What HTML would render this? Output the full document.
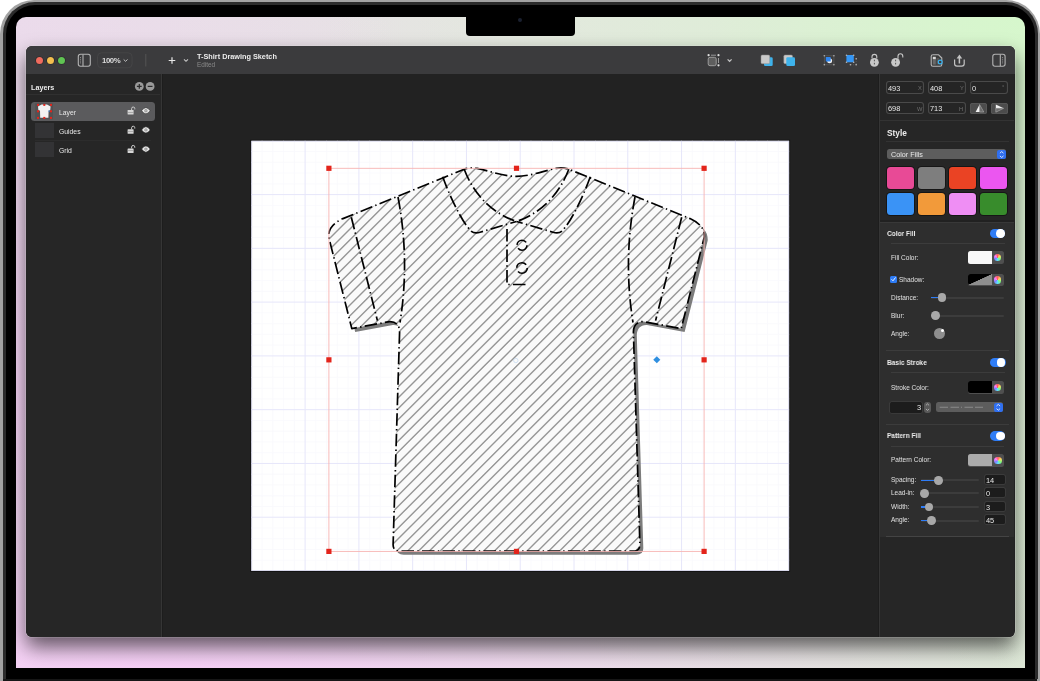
<!DOCTYPE html>
<html><head><meta charset="utf-8">
<style>
*{margin:0;padding:0;box-sizing:border-box}
html,body{width:1040px;height:681px;overflow:hidden;background:#fff}
body{position:relative;font-family:"Liberation Sans",sans-serif;color:#e6e6e6}
.a{position:absolute}
.t{position:absolute;white-space:nowrap;line-height:1;will-change:transform}
.fld{border-radius:3px;background:#252525;box-shadow:inset 0 0 0 1.1px #4a4a4a}
.fv{font-size:7.4px;color:#e8e8e8}
.fl{font-size:5.7px;color:#707070}
.sw{width:27px;height:21.5px;border-radius:3.5px;box-shadow:0 0 0 1px rgba(0,0,0,.4)}
.hd{font-size:7.3px;font-weight:bold;color:#ececec;transform:scaleX(.9);transform-origin:0 0}
.lb{font-size:6.5px;color:#e0e0e0}
.sep{height:.8px;background:#3c3c3c}
.tg{width:15.3px;height:9.7px;border-radius:5px;background:#2f7df6}
.kn{position:absolute;right:.6px;top:.6px;width:8.5px;height:8.5px;border-radius:50%;background:#fff}
.well{width:36px;height:12.6px;border-radius:2.5px;background:#4f4f4f}
.cw{right:2.5px;top:2.6px;width:7.4px;height:7.4px;border-radius:50%;background:conic-gradient(#ff5f5f,#ffd55f,#7fff7f,#5fe0ff,#7f7fff,#ff7fff,#ff5f5f);filter:blur(.3px)}
.trk{height:2px;background:#3c3c3c;border-radius:1px}
.knb{width:8.8px;height:8.8px;border-radius:50%;background:#a8a8a8}
.nf{width:20.4px;height:9.5px;border-radius:1.5px;background:#1c1c1c;box-shadow:0 0 0 .7px #404040}
</style></head>
<body>
<!-- MacBook frame -->
<div class="a" style="left:0;top:0;width:1040px;height:720px;border-radius:34px;background:#a2a2a2"></div>
<div class="a" style="left:2.5px;top:1.8px;width:1035px;height:720px;border-radius:32px;background:#2b2b2b"></div>
<div class="a" style="left:5.5px;top:4.5px;width:1029px;height:720px;border-radius:29px;background:#000"></div>
<div class="a" style="left:0;top:679px;width:1040px;height:2px;background:#161616"></div>
<div class="a" style="left:0;top:679px;width:3px;height:2px;background:#a2a2a2"></div>
<div class="a" style="left:1037px;top:679px;width:3px;height:2px;background:#a2a2a2"></div>

<!-- screen -->
<div class="a" id="screen" style="left:16px;top:17px;width:1009px;height:651px;border-radius:10px 10px 0 0;overflow:hidden;
background:radial-gradient(ellipse 95% 40% at 15% 100%,rgba(248,205,248,.85) 0%,rgba(240,212,240,.45) 55%,rgba(235,225,235,0) 100%),radial-gradient(ellipse 45% 110% at 0% 60%,rgba(245,208,245,.9) 0%,rgba(238,215,238,.4) 50%,rgba(235,225,235,0) 100%),radial-gradient(ellipse 70% 100% at 100% 0%,rgba(214,247,204,1) 0%,rgba(222,240,214,.6) 45%,rgba(228,232,224,0) 100%),linear-gradient(90deg,#e9dde9,#e5e4e2 50%,#dae9d3)">
</div>
<!-- notch -->
<div class="a" style="left:466px;top:10px;width:109px;height:26px;background:#000;border-radius:0 0 4px 4px"></div>
<div class="a" style="left:518px;top:18px;width:4px;height:4px;border-radius:50%;background:#1a2030"></div>

<!-- window -->
<div class="a" id="win" style="left:26px;top:46px;width:988.5px;height:591px;border-radius:6px;background:#222222;overflow:hidden;
box-shadow:0 0 0 0.6px rgba(255,255,255,.3),0 10px 20px rgba(0,0,0,.6)">
  <!-- toolbar -->
  <div class="a" style="left:0;top:0;width:988.5px;height:28px;background:#3b3b3d"></div>
  <div class="a" style="left:0;top:28px;width:134.5px;height:563px;background:#262626"></div>
  <div class="a" style="left:853.9px;top:28px;width:134.6px;height:563px;background:#262626"></div>
</div>

<!--CANVAS-->
<svg class="a" style="left:0;top:0" width="1040" height="681" viewBox="0 0 1040 681">
<rect x="250.85" y="140.3" width="538.75" height="431.10" fill="none" stroke="#121212" stroke-width="1"/>
<rect x="251.35" y="140.8" width="537.75" height="430.10" fill="#ffffff"/>
<path d="M262.11 140.8V570.9M272.86 140.8V570.9M283.62 140.8V570.9M294.37 140.8V570.9M315.88 140.8V570.9M326.63 140.8V570.9M337.39 140.8V570.9M348.14 140.8V570.9M369.65 140.8V570.9M380.41 140.8V570.9M391.16 140.8V570.9M401.92 140.8V570.9M423.43 140.8V570.9M434.18 140.8V570.9M444.94 140.8V570.9M455.69 140.8V570.9M477.20 140.8V570.9M487.96 140.8V570.9M498.71 140.8V570.9M509.47 140.8V570.9M530.98 140.8V570.9M541.74 140.8V570.9M552.49 140.8V570.9M563.25 140.8V570.9M584.75 140.8V570.9M595.51 140.8V570.9M606.26 140.8V570.9M617.02 140.8V570.9M638.53 140.8V570.9M649.28 140.8V570.9M660.04 140.8V570.9M670.79 140.8V570.9M692.30 140.8V570.9M703.06 140.8V570.9M713.81 140.8V570.9M724.57 140.8V570.9M746.08 140.8V570.9M756.83 140.8V570.9M767.59 140.8V570.9M778.35 140.8V570.9M251.35 151.56H789.1M251.35 162.31H789.1M251.35 173.06H789.1M251.35 183.82H789.1M251.35 205.33H789.1M251.35 216.09H789.1M251.35 226.84H789.1M251.35 237.59H789.1M251.35 259.11H789.1M251.35 269.86H789.1M251.35 280.62H789.1M251.35 291.37H789.1M251.35 312.88H789.1M251.35 323.63H789.1M251.35 334.39H789.1M251.35 345.14H789.1M251.35 366.65H789.1M251.35 377.41H789.1M251.35 388.16H789.1M251.35 398.92H789.1M251.35 420.43H789.1M251.35 431.19H789.1M251.35 441.94H789.1M251.35 452.69H789.1M251.35 474.20H789.1M251.35 484.96H789.1M251.35 495.71H789.1M251.35 506.47H789.1M251.35 527.98H789.1M251.35 538.73H789.1M251.35 549.49H789.1M251.35 560.24H789.1" stroke="#f9f9fd" stroke-width="0.8"/>
<path d="M305.12 140.8V570.9M358.90 140.8V570.9M412.67 140.8V570.9M466.45 140.8V570.9M520.23 140.8V570.9M574.00 140.8V570.9M627.77 140.8V570.9M681.55 140.8V570.9M735.32 140.8V570.9M251.35 194.58H789.1M251.35 248.35H789.1M251.35 302.12H789.1M251.35 355.90H789.1M251.35 409.68H789.1M251.35 463.45H789.1M251.35 517.23H789.1" stroke="#e6e6fa" stroke-width="1"/>
<defs><clipPath id="shirtclip"><path d="M 516.5 551.2 L 400.20 551.20 Q 393.00 551.20 393.10 544.50 L 399.60 332.00 C 399.60 325.50 396.00 321.30 389.50 321.60 L 351.80 328.60 L 328.70 237.00 C 328.20 228.50 333.50 223.00 343.00 218.60 L 464.20 169.20 C 468.50 167.80 473.00 167.60 477.00 168.40 C 490.00 171.00 503.00 176.30 516.50 176.30 C 530.00 176.30 543.00 171.00 556.00 168.40 C 560.00 167.60 564.50 167.80 568.80 169.20 L 690.00 218.60 C 699.50 223.00 704.80 228.50 704.30 237.00 L 681.20 328.60 L 643.50 321.60 C 637.00 321.30 633.40 325.50 633.40 332.00 L 639.90 544.50 Q 640.00 551.20 632.80 551.20 L 516.50 551.20 Z"/></clipPath></defs>
<rect x="251.75" y="141.20000000000002" width="536.95" height="429.30" fill="none" stroke="#d4d4ea" stroke-width=".8"/>
<path d="M 516.5 551.2 L 400.20 551.20 Q 393.00 551.20 393.10 544.50 L 399.60 332.00 C 399.60 325.50 396.00 321.30 389.50 321.60 L 351.80 328.60 L 328.70 237.00 C 328.20 228.50 333.50 223.00 343.00 218.60 L 464.20 169.20 C 468.50 167.80 473.00 167.60 477.00 168.40 C 490.00 171.00 503.00 176.30 516.50 176.30 C 530.00 176.30 543.00 171.00 556.00 168.40 C 560.00 167.60 564.50 167.80 568.80 169.20 L 690.00 218.60 C 699.50 223.00 704.80 228.50 704.30 237.00 L 681.20 328.60 L 643.50 321.60 C 637.00 321.30 633.40 325.50 633.40 332.00 L 639.90 544.50 Q 640.00 551.20 632.80 551.20 L 516.50 551.20 Z" fill="#7c7c7c" transform="translate(3.4 3.5)"/>
<path d="M 516.5 551.2 L 400.20 551.20 Q 393.00 551.20 393.10 544.50 L 399.60 332.00 C 399.60 325.50 396.00 321.30 389.50 321.60 L 351.80 328.60 L 328.70 237.00 C 328.20 228.50 333.50 223.00 343.00 218.60 L 464.20 169.20 C 468.50 167.80 473.00 167.60 477.00 168.40 C 490.00 171.00 503.00 176.30 516.50 176.30 C 530.00 176.30 543.00 171.00 556.00 168.40 C 560.00 167.60 564.50 167.80 568.80 169.20 L 690.00 218.60 C 699.50 223.00 704.80 228.50 704.30 237.00 L 681.20 328.60 L 643.50 321.60 C 637.00 321.30 633.40 325.50 633.40 332.00 L 639.90 544.50 Q 640.00 551.20 632.80 551.20 L 516.50 551.20 Z" fill="#fafafa"/>
<path d="M-67.85 560L332.15 160M-57.00 560L343.00 160M-46.15 560L353.85 160M-35.30 560L364.70 160M-24.45 560L375.55 160M-13.60 560L386.40 160M-2.75 560L397.25 160M8.10 560L408.10 160M18.95 560L418.95 160M29.80 560L429.80 160M40.65 560L440.65 160M51.50 560L451.50 160M62.35 560L462.35 160M73.20 560L473.20 160M84.05 560L484.05 160M94.90 560L494.90 160M105.75 560L505.75 160M116.60 560L516.60 160M127.45 560L527.45 160M138.30 560L538.30 160M149.15 560L549.15 160M160.00 560L560.00 160M170.85 560L570.85 160M181.70 560L581.70 160M192.55 560L592.55 160M203.40 560L603.40 160M214.25 560L614.25 160M225.10 560L625.10 160M235.95 560L635.95 160M246.80 560L646.80 160M257.65 560L657.65 160M268.50 560L668.50 160M279.35 560L679.35 160M290.20 560L690.20 160M301.05 560L701.05 160M311.90 560L711.90 160M322.75 560L722.75 160M333.60 560L733.60 160M344.45 560L744.45 160M355.30 560L755.30 160M366.15 560L766.15 160M377.00 560L777.00 160M387.85 560L787.85 160M398.70 560L798.70 160M409.55 560L809.55 160M420.40 560L820.40 160M431.25 560L831.25 160M442.10 560L842.10 160M452.95 560L852.95 160M463.80 560L863.80 160M474.65 560L874.65 160M485.50 560L885.50 160M496.35 560L896.35 160M507.20 560L907.20 160M518.05 560L918.05 160M528.90 560L928.90 160M539.75 560L939.75 160M550.60 560L950.60 160M561.45 560L961.45 160M572.30 560L972.30 160M583.15 560L983.15 160M594.00 560L994.00 160M604.85 560L1004.85 160M615.70 560L1015.70 160M626.55 560L1026.55 160M637.40 560L1037.40 160M648.25 560L1048.25 160M659.10 560L1059.10 160M669.95 560L1069.95 160M680.80 560L1080.80 160M691.65 560L1091.65 160M702.50 560L1102.50 160" stroke="#969696" stroke-width="1.4" clip-path="url(#shirtclip)"/>
<path d="M 516.5 551.2 L 400.20 551.20 Q 393.00 551.20 393.10 544.50 L 399.60 332.00 C 399.60 325.50 396.00 321.30 389.50 321.60 L 351.80 328.60 L 328.70 237.00 C 328.20 228.50 333.50 223.00 343.00 218.60 L 464.20 169.20 C 468.50 167.80 473.00 167.60 477.00 168.40 C 490.00 171.00 503.00 176.30 516.50 176.30 C 530.00 176.30 543.00 171.00 556.00 168.40 C 560.00 167.60 564.50 167.80 568.80 169.20 L 690.00 218.60 C 699.50 223.00 704.80 228.50 704.30 237.00 L 681.20 328.60 L 643.50 321.60 C 637.00 321.30 633.40 325.50 633.40 332.00 L 639.90 544.50 Q 640.00 551.20 632.80 551.20 L 516.50 551.20 Z" stroke="#000" stroke-width="1.7" fill="none" stroke-dasharray="12.5 3.3 1.4 3.3" stroke-linejoin="round"/>
<path d="M 351.3 217.2 L 377.4 320.6" stroke="#000" stroke-width="1.7" fill="none" stroke-dasharray="12.5 3.3 1.4 3.3" stroke-linejoin="round"/>
<path d="M 681.70 217.2 L 655.60 320.6" stroke="#000" stroke-width="1.7" fill="none" stroke-dasharray="12.5 3.3 1.4 3.3" stroke-linejoin="round"/>
<path d="M 398 197 Q 410 260 400 322.5" stroke="#000" stroke-width="1.7" fill="none" stroke-dasharray="12.5 3.3 1.4 3.3" stroke-linejoin="round"/>
<path d="M 635.00 197 Q 623.00 260 633.00 322.5" stroke="#000" stroke-width="1.7" fill="none" stroke-dasharray="12.5 3.3 1.4 3.3" stroke-linejoin="round"/>
<path d="M 442.7 176.8 C 450 197, 462 222, 471 231 Q 474.5 234 480 232.2 L 516.5 221.5" stroke="#000" stroke-width="1.7" fill="none" stroke-dasharray="12.5 3.3 1.4 3.3" stroke-linejoin="round"/>
<path d="M 590.30 176.8 C 583.00 197, 571.00 222, 562.00 231 Q 558.50 234 553.00 232.2 L 516.5 221.5" stroke="#000" stroke-width="1.7" fill="none" stroke-dasharray="12.5 3.3 1.4 3.3" stroke-linejoin="round"/>
<path d="M 464.2 169.2 C 474 195, 492 213, 516.5 221.5" stroke="#000" stroke-width="1.7" fill="none" stroke-dasharray="12.5 3.3 1.4 3.3" stroke-linejoin="round"/>
<path d="M 568.80 169.2 C 559.00 195, 541.00 213, 516.5 221.5" stroke="#000" stroke-width="1.7" fill="none" stroke-dasharray="12.5 3.3 1.4 3.3" stroke-linejoin="round"/>
<path d="M 525.5 284.5 L 507 284.5 L 507 227.5" stroke="#000" stroke-width="1.7" fill="none" stroke-dasharray="12.5 3.3 1.4 3.3" stroke-linejoin="round"/>
<circle cx="522" cy="245.2" r="5" stroke="#000" stroke-width="1.6" fill="none" stroke-dasharray="12 3.7"/>
<circle cx="522" cy="268" r="5.3" stroke="#000" stroke-width="1.6" fill="none" stroke-dasharray="12.5 4"/>
<rect x="328.9" y="168.3" width="375.20" height="383.10" fill="none" stroke="#f7b4b2" stroke-width="0.9"/>
<rect x="326.30" y="165.70" width="5.2" height="5.2" fill="#e3241b"/>
<rect x="326.30" y="357.25" width="5.2" height="5.2" fill="#e3241b"/>
<rect x="326.30" y="548.80" width="5.2" height="5.2" fill="#e3241b"/>
<rect x="513.90" y="165.70" width="5.2" height="5.2" fill="#e3241b"/>
<rect x="513.90" y="548.80" width="5.2" height="5.2" fill="#e3241b"/>
<rect x="701.50" y="165.70" width="5.2" height="5.2" fill="#e3241b"/>
<rect x="701.50" y="357.25" width="5.2" height="5.2" fill="#e3241b"/>
<rect x="701.50" y="548.80" width="5.2" height="5.2" fill="#e3241b"/>
<rect x="654.3" y="357.3" width="5" height="5" fill="#2f8fe0" transform="rotate(45 656.8 359.8)"/>
<circle cx="515.8" cy="360.5" r="2.2" fill="none" stroke="#b8d4f0" stroke-width=".6"/>
</svg>
<!--/CANVAS-->
<!-- toolbar contents (page coords) -->
<div class="a" style="left:36.1px;top:56.5px;width:7px;height:7px;border-radius:50%;background:#ef6b5e;box-shadow:0 0 0 .6px rgba(0,0,0,.35)"></div>
<div class="a" style="left:47.2px;top:56.5px;width:7px;height:7px;border-radius:50%;background:#f4bf4f;box-shadow:0 0 0 .6px rgba(0,0,0,.35)"></div>
<div class="a" style="left:58px;top:56.5px;width:7px;height:7px;border-radius:50%;background:#60c453;box-shadow:0 0 0 .6px rgba(0,0,0,.35)"></div>

<svg class="a" style="left:0;top:0" width="1040" height="681" viewBox="0 0 1040 681">
  <!-- sidebar toggle icon -->
  <rect x="78.3" y="54.3" width="12" height="12" rx="2.2" fill="none" stroke="#b4b4b4" stroke-width="1.1"/>
  <line x1="83" y1="54.5" x2="83" y2="66" stroke="#b4b4b4" stroke-width="1.1"/>
  <line x1="80.5" y1="57" x2="80.5" y2="63.5" stroke="#8a8a8a" stroke-width="1" stroke-dasharray="1,.8"/>
  <!-- zoom box -->
  <rect x="97.5" y="52.8" width="34.6" height="15" rx="4" fill="#3b3b3d" stroke="#474749" stroke-width="0.8"/>
  <path d="M123.7 59.5 L125.6 61.3 L127.5 59.5" fill="none" stroke="#cfcfcf" stroke-width="0.9"/>
  <line x1="145.8" y1="54" x2="145.8" y2="66.5" stroke="#555" stroke-width="1"/>
  <!-- plus -->
  <path d="M172 57.2 V63.8 M168.7 60.5 H175.3" stroke="#e8e8e8" stroke-width="1.2"/>
  <path d="M184 59.4 L186 61.3 L188 59.4" fill="none" stroke="#c4c4c4" stroke-width="1.1"/>

  <!-- right toolbar icons -->
  <g>
    <rect x="708.2" y="57.3" width="8" height="8.4" rx="1.8" fill="#5e5e5e" stroke="#9c9c9c" stroke-width="1"/>
    <path d="M711 55.2 H716" stroke="#9a9a9a" stroke-width="1"/>
    <path d="M718.5 58 V63" stroke="#9a9a9a" stroke-width="1"/>
    <circle cx="708.6" cy="55.2" r="1.1" fill="#e0e0e0"/><circle cx="718.5" cy="55.2" r="1.1" fill="#e0e0e0"/><circle cx="718.5" cy="65.3" r="1.1" fill="#e0e0e0"/>
    <path d="M727.6 59.4 L729.6 61.3 L731.6 59.4" fill="none" stroke="#c4c4c4" stroke-width="1.2"/>
  </g>
  <g>
    <rect x="764" y="57.3" width="8.7" height="8.7" rx="1.3" fill="#3eb3ec"/>
    <rect x="761" y="55" width="8.7" height="8.7" rx="1.3" fill="#c9c9c9" stroke="#8a8a8a" stroke-width=".5"/>
    <rect x="783.8" y="55" width="8.7" height="8.7" rx="1.3" fill="#c9c9c9" stroke="#8a8a8a" stroke-width=".5"/>
    <rect x="786.3" y="57.3" width="8.7" height="8.7" rx="1.3" fill="#3eb3ec"/>
  </g>
  <g>
    <rect x="824.3" y="55.8" width="9.6" height="9" fill="none" stroke="#5c5c5c" stroke-width=".7"/>
    <circle cx="829.6" cy="60.8" r="2.5" fill="#f0f0f0"/>
    <rect x="825.8" y="57" width="4.9" height="4.6" rx=".5" fill="#2f86f0"/>
    <path d="M830.7 59.6 A2.2 2.2 0 0 1 827.6 61.6" fill="none" stroke="#2f86f0" stroke-width="0"/>
    <g fill="#b0b0b0"><circle cx="824.3" cy="55.8" r=".8"/><circle cx="833.9" cy="55.8" r=".8"/><circle cx="824.3" cy="64.8" r=".8"/><circle cx="833.9" cy="64.8" r=".8"/></g>
    <rect x="846.4" y="55.1" width="7.4" height="7.2" rx=".3" fill="#3597f5"/>
    <path d="M851 64.8 H856.2 V58.8" fill="none" stroke="#6a6a6a" stroke-width=".6" stroke-dasharray="1,1"/>
    <g fill="#b8b8b8"><circle cx="846.5" cy="55.2" r=".8"/><circle cx="853.7" cy="55.2" r=".8"/><circle cx="846.5" cy="62.2" r=".8"/><circle cx="853.7" cy="62.2" r=".8"/><circle cx="856.2" cy="58.8" r=".8"/><circle cx="850.4" cy="64.8" r=".8"/><circle cx="856.2" cy="64.8" r=".8"/></g>
  </g>
  <g fill="#c8c8c8">
    <path d="M872 58.5 V56.8 A2.4 2.4 0 0 1 876.8 56.8 V58.5" fill="none" stroke="#c8c8c8" stroke-width="1.1"/>
    <circle cx="874.4" cy="62.3" r="4.4"/>
    <rect x="873.9" y="59.7" width="1" height="1.6" fill="#555"/><rect x="873.9" y="62.8" width="1" height="1.6" fill="#555"/>
    <path d="M898 58.8 V56.2 A2.4 2.4 0 0 1 902.8 56.2 V57.5" fill="none" stroke="#c8c8c8" stroke-width="1.1"/>
    <circle cx="895.6" cy="62.3" r="4.4"/>
    <rect x="895.1" y="59.7" width="1" height="1.6" fill="#555"/><rect x="895.1" y="62.8" width="1" height="1.6" fill="#555"/>
  </g>
  <g>
    <path d="M933 54.8 H938.6 L941.8 58 V64.5 Q941.8 66.3 940 66.3 H933 Q931.2 66.3 931.2 64.5 V56.6 Q931.2 54.8 933 54.8 Z" fill="#3c3c3c" stroke="#b8b8b8" stroke-width="1.1" stroke-linejoin="round"/>
    <rect x="932.8" y="56.8" width="3" height="2.6" fill="#d8d8d8"/><rect x="932.8" y="59.6" width="3" height="5" fill="#6a6a6a"/>
    <rect x="936.5" y="58" width="2.5" height="6.5" fill="#555"/>
    <circle cx="940.2" cy="62" r="1.9" fill="#3c3c3c" stroke="#3ab4f2" stroke-width="1.2"/>
    <path d="M954.6 59.6 V63.8 Q954.6 66.2 957 66.2 H961.8 Q964.2 66.2 964.2 63.8 V59.6" fill="none" stroke="#c4c4c4" stroke-width="1.2"/>
    <path d="M959.4 63.5 V57.5" stroke="#c4c4c4" stroke-width="1.5"/>
    <path d="M956.6 58.6 L959.4 54.6 L962.2 58.6 Z" fill="#c4c4c4"/>
    <rect x="992.8" y="54.3" width="12.3" height="12" rx="2.2" fill="none" stroke="#b4b4b4" stroke-width="1.1"/>
    <line x1="1000.3" y1="54.5" x2="1000.3" y2="66" stroke="#b4b4b4" stroke-width="1.1"/>
    <line x1="1002.6" y1="57" x2="1002.6" y2="63.5" stroke="#8a8a8a" stroke-width="1" stroke-dasharray="1,.8"/>
  </g>
</svg>
<div class="t" style="left:102px;top:56.8px;font-size:7.8px;font-weight:bold;color:#dcdcdc;letter-spacing:-.4px">100%</div>
<div class="t" style="left:197.3px;top:52.6px;font-size:7.3px;font-weight:bold;color:#ececec">T-Shirt Drawing Sketch</div>
<div class="t" style="left:197.3px;top:61.6px;font-size:6.4px;color:#8a8a8a">Edited</div>

<!--PANELS-->
<!-- sidebar -->
<div class="a" style="left:160.5px;top:74px;width:1px;height:563px;background:#353535"></div><div class="a" style="left:161.5px;top:74px;width:1px;height:563px;background:#1d1d1d"></div>
<div class="t" style="left:31.4px;top:83.8px;font-size:7.2px;font-weight:bold;color:#ececec">Layers</div>
<div class="a" style="left:26px;top:94px;width:134px;height:1px;background:#303030"></div>
<svg class="a" style="left:0;top:0" width="200" height="170" viewBox="0 0 200 170">
  <circle cx="139.3" cy="86.4" r="4.4" fill="#9a9a9a"/>
  <path d="M139.3 84 V88.8 M136.9 86.4 H141.7" stroke="#2a2a2a" stroke-width="1.2"/>
  <circle cx="150.1" cy="86.4" r="4.4" fill="#9a9a9a"/>
  <path d="M147.7 86.4 H152.5" stroke="#2a2a2a" stroke-width="1.2"/>
</svg>
<div class="a" style="left:31.4px;top:101.6px;width:123.6px;height:19.5px;border-radius:3.5px;background:#5b5b5d"></div>
<div class="a" style="left:35.3px;top:122.6px;width:18.5px;height:15.3px;background:#333335"></div>
<div class="a" style="left:35.3px;top:141.9px;width:18.5px;height:15.3px;background:#333335"></div>
<div class="a" style="left:35px;top:140px;width:116px;height:.8px;background:#2c2c2c"></div>
<svg class="a" style="left:0;top:0" width="200" height="170" viewBox="0 0 200 170">
  <!-- thumb shirt -->
  <rect x="35.2" y="103.4" width="17.8" height="15.8" fill="#525254"/>
  <path d="M41.6 104.6 L43.6 104.4 Q44.3 105.4 45 104.4 L47 104.6 L50.6 106.4 L50.2 110.2 L48.6 110.6 L48.4 117.8 L40.2 117.8 L40 110.6 L38.4 110.2 L38 106.4 Z" fill="#f2f2f2"/>
  <g fill="#e3241b">
    <rect x="37" y="103.9" width="2" height="2"/><rect x="43.3" y="103.9" width="2" height="2"/><rect x="50" y="103.9" width="2" height="2"/>
    <rect x="37" y="110.3" width="2" height="2"/><rect x="50" y="110.3" width="2" height="2"/>
    <rect x="37" y="116.9" width="2" height="2"/><rect x="43.3" y="116.9" width="2" height="2"/><rect x="50" y="116.9" width="2" height="2"/>
  </g>
  <rect x="48.5" y="110.6" width="1.1" height="1.1" fill="#3a8ff2"/>
  <!-- locks -->
  <g id="lk">
    <rect x="127.6" y="110" width="6" height="4.6" rx=".6" fill="#d6d6d6"/>
    <path d="M131.6 110 V108.6 A1.6 1.6 0 0 1 134.8 108.6 V109.4" fill="none" stroke="#d6d6d6" stroke-width=".9"/>
    <rect x="127.6" y="112" width="6" height=".6" fill="#8a8a8a"/>
  </g>
  <use href="#lk" y="19.2"/><use href="#lk" y="38.4"/>
  <g id="eye">
    <path d="M141.7 110.7 Q145.9 104.6 150.1 110.7 Q145.9 116.8 141.7 110.7 Z" fill="#ececec" stroke="#2a2a2a" stroke-width=".5"/>
    <circle cx="145.9" cy="110.7" r="1.7" fill="#9a9a9a"/>
    <circle cx="145.9" cy="110.7" r=".7" fill="#c8c8c8"/>
  </g>
  <use href="#eye" y="19.2"/><use href="#eye" y="38.4"/>
</svg>
<div class="t" style="left:59px;top:109.6px;font-size:6.8px;color:#e6e6e6">Layer</div>
<div class="t" style="left:59px;top:128.8px;font-size:6.8px;color:#e6e6e6">Guides</div>
<div class="t" style="left:59px;top:148px;font-size:6.8px;color:#e6e6e6">Grid</div>

<!-- inspector -->
<div class="a" style="left:877.7px;top:74px;width:1px;height:563px;background:#1d1d1d"></div><div class="a" style="left:878.9px;top:74px;width:1px;height:563px;background:#353535"></div>
<div class="a" style="left:879.9px;top:219.8px;width:134.6px;height:2px;background:#212121"></div><div class="a" style="left:879.9px;top:221.8px;width:134.6px;height:315px;background:#2e2e2e;border-top:.8px solid #383838"></div>
<!-- fields -->
<div class="a fld" style="left:886.4px;top:81.4px;width:38.1px;height:12.5px"></div>
<div class="a fld" style="left:928.2px;top:81.4px;width:38.3px;height:12.5px"></div>
<div class="a fld" style="left:970.2px;top:81.4px;width:38px;height:12.5px"></div>
<div class="a fld" style="left:886.4px;top:101.8px;width:38.1px;height:12.5px"></div>
<div class="a fld" style="left:928.2px;top:101.8px;width:38.3px;height:12.5px"></div>
<div class="a" style="left:970.3px;top:103px;width:17px;height:10.7px;border-radius:2.5px;background:#4c4c4c;box-shadow:inset 0 0 0 .8px #5a5a5a"></div>
<div class="a" style="left:991px;top:103px;width:17px;height:10.7px;border-radius:2.5px;background:#4c4c4c;box-shadow:inset 0 0 0 .8px #5a5a5a"></div>
<div class="t fv" style="left:888.3px;top:84.8px">493</div>
<div class="t fv" style="left:930px;top:84.8px">408</div>
<div class="t fv" style="left:972px;top:84.8px">0</div>
<div class="t fv" style="left:888.3px;top:105.2px">698</div>
<div class="t fv" style="left:930px;top:105.2px">713</div>
<div class="t fl" style="left:917.8px;top:86.2px">X</div>
<div class="t fl" style="left:959.8px;top:86.2px">Y</div>
<div class="t fl" style="left:1001.9px;top:84.5px">°</div>
<div class="t fl" style="left:916.9px;top:106.6px">W</div>
<div class="t fl" style="left:959.1px;top:106.6px">H</div>
<svg class="a" style="left:860px;top:70px" width="180" height="480" viewBox="860 70 180 480">
  <path d="M979.6 104.6 L975.6 112 L979.6 112 Z" fill="#f2f2f2"/>
  <path d="M979.6 104.6 L983.8 112 L979.6 112 Z" fill="#6a6a6a" stroke="#b0b0b0" stroke-width=".6" stroke-linejoin="round"/>
  <path d="M995.8 104.4 L1003.6 108.3 L995.8 108.3 Z" fill="#f2f2f2"/>
  <path d="M995.8 108.3 L1003.6 108.3 L995.8 112.2 Z" fill="#6a6a6a" stroke="#b0b0b0" stroke-width=".6" stroke-linejoin="round"/>
</svg>
<div class="a" style="left:880.2px;top:120.2px;width:134px;height:.8px;background:#333"></div>
<div class="t" style="left:886.8px;top:129px;font-size:8.3px;font-weight:bold;color:#ececec">Style</div>
<div class="a" style="left:886px;top:141.1px;width:123px;height:.8px;background:#333"></div>
<div class="a" style="left:887.1px;top:149.4px;width:119.1px;height:10.1px;border-radius:2.5px;background:#5d5d5d"></div>
<div class="a" style="left:997.4px;top:150px;width:8.6px;height:9px;border-radius:2px;background:#2f6ff0"></div>
<div class="t" style="left:891.2px;top:151.2px;font-size:7.2px;color:#e8e8e8">Color Fills</div>
<svg class="a" style="left:990px;top:148px" width="20" height="14" viewBox="990 148 20 14">
  <path d="M999.9 153.2 L1001.7 151.6 L1003.5 153.2 M999.9 155.9 L1001.7 157.5 L1003.5 155.9" fill="none" stroke="#fff" stroke-width=".8"/>
</svg>
<!-- swatches -->
<div class="a sw" style="left:887.1px;top:167.4px;background:#e84a96"></div>
<div class="a sw" style="left:918.1px;top:167.4px;background:#7e7e7e"></div>
<div class="a sw" style="left:949.2px;top:167.4px;background:#ea4324"></div>
<div class="a sw" style="left:980.3px;top:167.4px;background:#eb56f0"></div>
<div class="a sw" style="left:887.1px;top:193px;background:#3a93f6"></div>
<div class="a sw" style="left:918.1px;top:193px;background:#f29a3a"></div>
<div class="a sw" style="left:949.2px;top:193px;background:#ef8ef4"></div>
<div class="a sw" style="left:980.3px;top:193px;background:#388c2c"></div>

<!-- Color Fill section -->
<div class="t hd" style="left:886.8px;top:230.4px">Color Fill</div>
<div class="a tg" style="left:990px;top:228.6px"><div class="kn"></div></div>
<div class="a sep" style="left:890.5px;top:243.2px;width:114px"></div>
<div class="t lb" style="left:890.9px;top:254.8px">Fill Color:</div>
<div class="a well" style="left:967.9px;top:251.2px"><div class="a" style="left:0;top:0;width:24.2px;height:12.6px;border-radius:2.5px 0 0 2.5px;background:#f8f8f8"></div><div class="a cw"></div></div>
<div class="a" style="left:890.1px;top:275.9px;width:6.7px;height:6.7px;border-radius:1.5px;background:#2e7cf6"></div>
<svg class="a" style="left:890px;top:275px" width="8" height="8" viewBox="890 275 8 8"><path d="M891.5 279.3 L893 280.8 L895.6 277.4" fill="none" stroke="#fff" stroke-width=".9"/></svg>
<div class="t lb" style="left:899.3px;top:277.2px">Shadow:</div>
<div class="a well" style="left:967.9px;top:273.7px"><div class="a" style="left:0;top:0;width:24.2px;height:11.7px;border-radius:2.5px 0 0 2.5px;background:linear-gradient(to bottom right,#000 49%,#8e8e8e 51%)"></div><div class="a cw"></div></div>
<div class="t lb" style="left:890.9px;top:295.4px">Distance:</div>
<div class="a trk" style="left:930.9px;top:296.65px;width:72.7px"></div>
<div class="a" style="left:930.9px;top:296.9px;width:10px;height:1.4px;background:#2e7cf6"></div>
<div class="a knb" style="left:937.5px;top:293.2px"></div>
<div class="t lb" style="left:890.9px;top:313.2px">Blur:</div>
<div class="a trk" style="left:930.9px;top:314.65px;width:72.7px"></div>
<div class="a knb" style="left:930.9px;top:311.2px"></div>
<div class="t lb" style="left:890.9px;top:330.8px">Angle:</div>
<div class="a" style="left:934.2px;top:327.7px;width:11px;height:11px;border-radius:50%;background:#8e8e8e"></div>
<div class="a" style="left:940.6px;top:328.8px;width:3.3px;height:3.3px;border-radius:50%;background:#fff"></div>
<div class="a sep" style="left:885.6px;top:350.3px;width:123.4px"></div>

<!-- Basic Stroke -->
<div class="t hd" style="left:886.8px;top:359.1px">Basic Stroke</div>
<div class="a tg" style="left:990.3px;top:357.6px"><div class="kn"></div></div>
<div class="a sep" style="left:890.5px;top:371.8px;width:114px"></div>
<div class="t lb" style="left:890.9px;top:384.6px">Stroke Color:</div>
<div class="a well" style="left:967.9px;top:381.2px"><div class="a" style="left:0;top:0;width:24.2px;height:12px;border-radius:2.5px 0 0 2.5px;background:#000"></div><div class="a cw"></div></div>
<div class="a" style="left:889.7px;top:401.7px;width:32.3px;height:11px;border-radius:1.5px;background:#1c1c1c;box-shadow:0 0 0 .6px #444"></div>
<div class="t fv" style="left:916.6px;top:404px;font-size:7.5px">3</div>
<div class="a" style="left:924.2px;top:401.7px;width:6.6px;height:11px;border-radius:3px;background:#5a5a5a"></div>
<svg class="a" style="left:920px;top:400px" width="16" height="16" viewBox="920 400 16 16"><path d="M925.9 405.4 L927.5 403.9 L929.1 405.4 M925.9 408.9 L927.5 410.4 L929.1 408.9" fill="none" stroke="#cfcfcf" stroke-width=".7"/></svg>
<div class="a" style="left:935.5px;top:402.1px;width:67.6px;height:10.2px;border-radius:2.5px;background:#5d5d5d"></div>
<div class="a" style="left:994px;top:403px;width:8.6px;height:8.6px;border-radius:2px;background:#2f6ff0"></div>
<svg class="a" style="left:930px;top:400px" width="80" height="16" viewBox="930 400 80 16">
  <path d="M939.7 407.2 H948 M950.5 407.2 H959 M961 407.2 H962 M964.5 407.2 H973 M975 407.2 H983" stroke="#8a8a8a" stroke-width="1.1"/>
  <path d="M996.5 406 L998.3 404.4 L1000.1 406 M996.5 408.6 L998.3 410.2 L1000.1 408.6" fill="none" stroke="#fff" stroke-width=".8"/>
</svg>
<div class="a sep" style="left:885.6px;top:424.4px;width:123.4px"></div>

<!-- Pattern Fill -->
<div class="t hd" style="left:887px;top:432.1px">Pattern Fill</div>
<div class="a tg" style="left:990px;top:431.2px"><div class="kn"></div></div>
<div class="a sep" style="left:890.9px;top:445.6px;width:112.8px"></div>
<div class="t lb" style="left:890.9px;top:457.0px">Pattern Color:</div>
<div class="a well" style="left:968.1px;top:454.1px"><div class="a" style="left:0;top:0;width:24.2px;height:11.8px;border-radius:2.5px 0 0 2.5px;background:#ababab"></div><div class="a cw"></div></div>
<div class="t lb" style="left:890.9px;top:477.0px">Spacing:</div>
<div class="t lb" style="left:890.9px;top:490.2px">Lead-in:</div>
<div class="t lb" style="left:890.9px;top:504.0px">Width:</div>
<div class="t lb" style="left:890.9px;top:517.2px">Angle:</div>
<div class="a trk" style="left:920.5px;top:479.25px;width:58.5px"></div>
<div class="a trk" style="left:920.5px;top:492.45px;width:58.5px"></div>
<div class="a trk" style="left:920.5px;top:506.05px;width:58.5px"></div>
<div class="a trk" style="left:920.5px;top:519.65px;width:58.5px"></div>
<div class="a" style="left:920.5px;top:479.5px;width:15px;height:1.4px;background:#2e7cf6"></div>
<div class="a" style="left:920.5px;top:506.3px;width:6px;height:1.4px;background:#2e7cf6"></div>
<div class="a" style="left:920.5px;top:519.9px;width:8px;height:1.4px;background:#2e7cf6"></div>
<div class="a knb" style="left:934.1px;top:475.8px"></div>
<div class="a knb" style="left:920.3px;top:489px"></div>
<div class="a knb" style="left:924.7px;top:502.6px"></div>
<div class="a knb" style="left:927px;top:516.2px"></div>
<div class="a nf" style="left:984.7px;top:474.7px"></div>
<div class="a nf" style="left:984.7px;top:487.8px"></div>
<div class="a nf" style="left:984.7px;top:501.5px"></div>
<div class="a nf" style="left:984.7px;top:514.8px"></div>
<div class="t fv" style="left:986.3px;top:476.6px">14</div>
<div class="t fv" style="left:986.3px;top:489.8px">0</div>
<div class="t fv" style="left:986.3px;top:503.5px">3</div>
<div class="t fv" style="left:986.3px;top:516.8px">45</div>
<div class="a sep" style="left:885.6px;top:536px;width:123.4px;background:#444"></div>
<!--/PANELS-->
</body></html>
